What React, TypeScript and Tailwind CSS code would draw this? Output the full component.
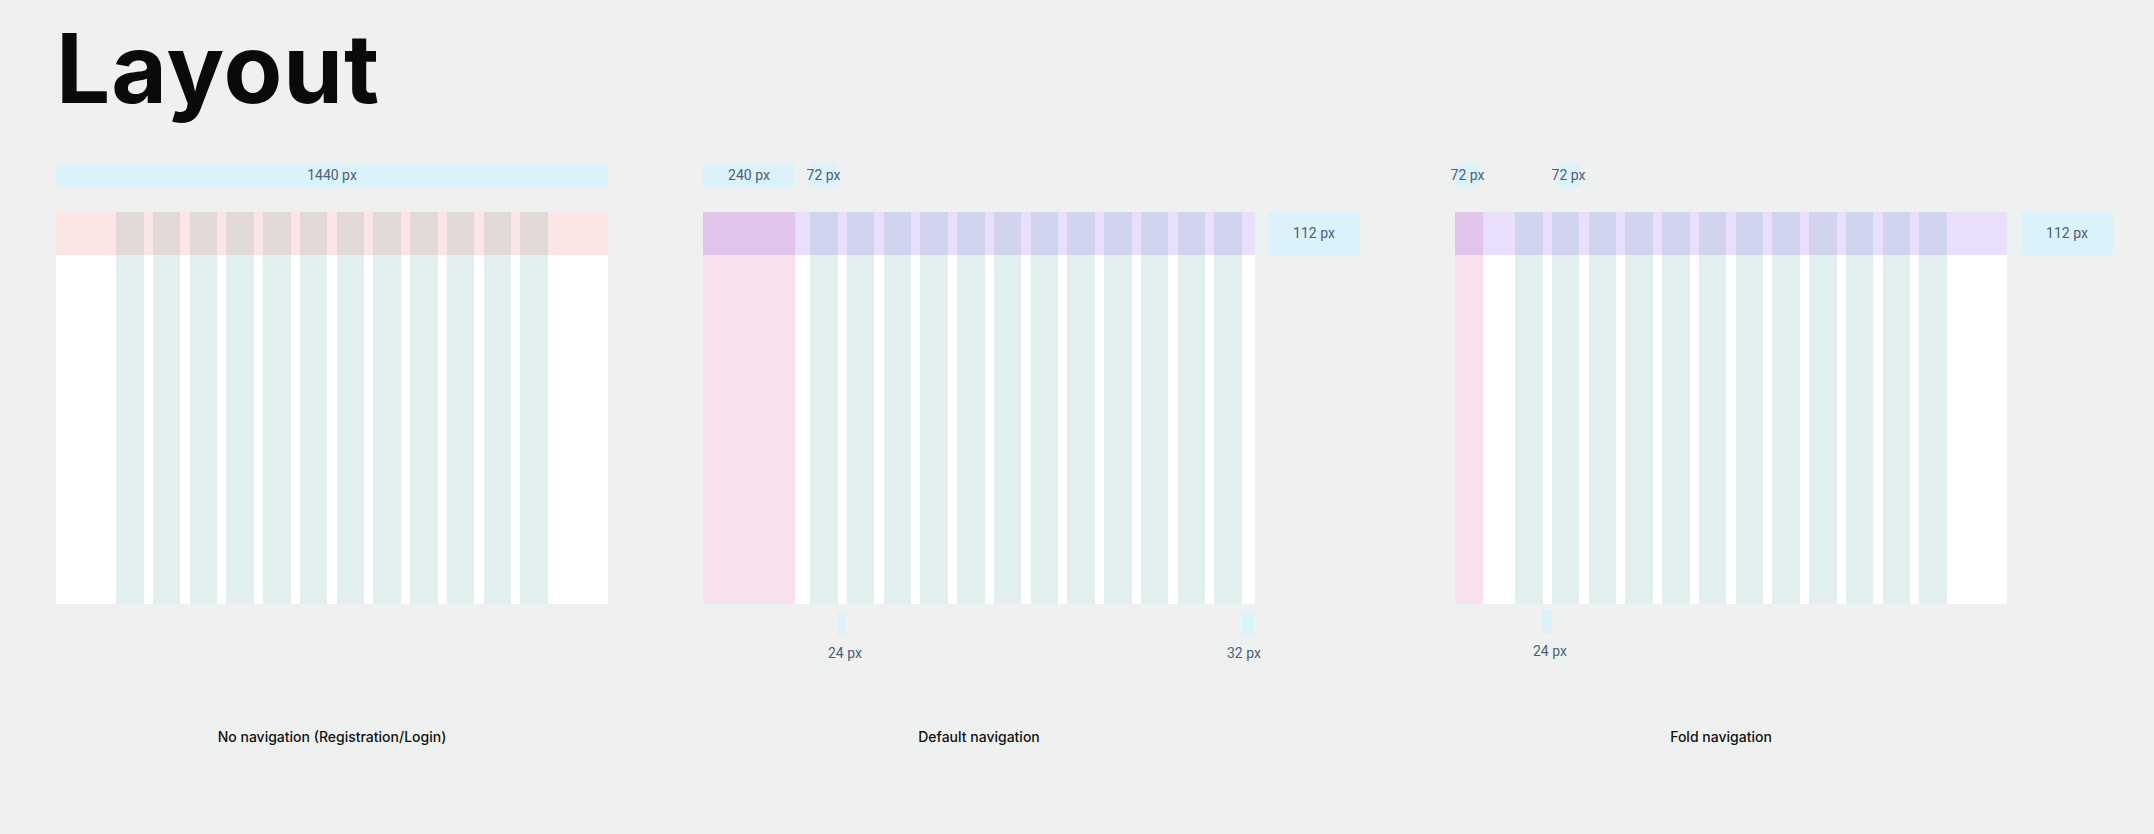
import React from "react";

function Columns({ colClass }: { colClass: string }) {
  return (
    <div className="grid h-full w-[432px] shrink-0 grid-cols-12 gap-x-[9.2px]">
      {Array.from({ length: 12 }).map((_, i) => (
        <div key={i} className={colClass} />
      ))}
    </div>
  );
}

function Label({ text, className }: { text: string; className: string }) {
  return (
    <div
      className={`flex h-[24px] shrink-0 items-center justify-center whitespace-nowrap bg-[#dcf2fb] text-[14px] leading-[20px] text-[#4b6079] [font-family:Roboto,sans-serif] ${className}`}
    >
      {text}
    </div>
  );
}

function SideLabel() {
  return (
    <div className="flex h-[43px] w-[92px] shrink-0 items-center justify-center bg-[#dcf2fb] text-[14px] text-[#4b6079] [font-family:Roboto,sans-serif]">
      112 px
    </div>
  );
}

function Caption({ text, extra }: { text: string; extra: string }) {
  return (
    <div
      className={`w-[552px] text-center text-[14px] font-medium leading-[20px] text-[#111111] [font-family:Inter,sans-serif] ${extra}`}
    >
      {text}
    </div>
  );
}

export default function App() {
  return (
    <div className="min-h-screen w-full bg-[#eff1f0] pl-[56px] pt-[20px]">
      <h1 className="h-[96px] text-[96px] font-bold leading-[96px] tracking-[1px] text-[#0a0a0a] [font-family:Inter,sans-serif]">
        Layout
      </h1>

      <div className="mt-[47px] flex items-start gap-[95px]">
        {/* No navigation */}
        <div className="flex w-[552px] shrink-0 flex-col">
          <Label text="1440 px" className="w-[552px]" />
          <div className="mt-[25px] flex h-[392px] w-[552px] flex-col bg-white">
            <div className="h-[43px] bg-[#fbe5e5] px-[60px]">
              <Columns colClass="bg-[#e1d8d8]" />
            </div>
            <div className="flex-1 px-[60px]">
              <Columns colClass="bg-[#e1efee]" />
            </div>
          </div>
          <div className="h-[123px]" />
          <Caption text="No navigation (Registration/Login)" extra="" />
        </div>

        {/* Default navigation */}
        <div className="flex shrink-0 flex-col">
          <div className="flex items-start">
            <Label text="240 px" className="w-[92px]" />
            <Label text="72 px" className="ml-[15px] w-[27px]" />
          </div>
          <div className="mt-[25px] flex items-start gap-[13px]">
            <div className="flex h-[392px] w-[552px] bg-white">
              <div className="flex w-[92px] shrink-0 flex-col">
                <div className="h-[43px] bg-[#e2c5ec]" />
                <div className="flex-1 bg-[#f7e1ef]" />
              </div>
              <div className="flex flex-1 flex-col">
                <div className="h-[43px] bg-[#e9dffa] pl-[15px] pr-[13px]">
                  <Columns colClass="bg-[#d1d4ee]" />
                </div>
                <div className="flex-1 pl-[15px] pr-[13px]">
                  <Columns colClass="bg-[#e1efee]" />
                </div>
              </div>
            </div>
            <SideLabel />
          </div>
          <div className="mt-[8px] flex h-[24px]">
            <div className="ml-[134px] w-[9px] bg-[#dcf2fb]" />
            <div className="ml-[396px] w-[12px] bg-[#dcf2fb]" />
          </div>
          <div className="mt-[7px] flex text-[14px] leading-[20px] text-[#4b6079] [font-family:Roboto,sans-serif]">
            <div className="ml-[125px] w-[36px] whitespace-nowrap">24 px</div>
            <div className="ml-[363px] w-[36px] whitespace-nowrap">32 px</div>
          </div>
          <Caption text="Default navigation" extra="mt-[64px]" />
        </div>

        {/* Fold navigation */}
        <div className="flex shrink-0 flex-col">
          <div className="flex items-start">
            <Label text="72 px" className="ml-[1px] w-[23px]" />
            <Label text="72 px" className="ml-[78px] w-[23px]" />
          </div>
          <div className="mt-[25px] flex items-start gap-[14px]">
            <div className="flex h-[392px] w-[552px] bg-white">
              <div className="flex w-[28px] shrink-0 flex-col">
                <div className="h-[43px] bg-[#e2c5ec]" />
                <div className="flex-1 bg-[#f7e1ef]" />
              </div>
              <div className="flex flex-1 flex-col">
                <div className="h-[43px] bg-[#e9dffa] pl-[32px] pr-[60px]">
                  <Columns colClass="bg-[#d1d4ee]" />
                </div>
                <div className="flex-1 pl-[32px] pr-[60px]">
                  <Columns colClass="bg-[#e1efee]" />
                </div>
              </div>
            </div>
            <SideLabel />
          </div>
          <div className="mt-[6px] flex h-[24px]">
            <div className="ml-[87px] w-[10px] bg-[#dcf2fb]" />
          </div>
          <div className="mt-[7px] flex text-[14px] leading-[20px] text-[#4b6079] [font-family:Roboto,sans-serif]">
            <div className="ml-[78px] w-[36px] whitespace-nowrap">24 px</div>
          </div>
          <Caption text="Fold navigation" extra="mt-[66px] pr-[20px]" />
        </div>
      </div>
    </div>
  );
}
